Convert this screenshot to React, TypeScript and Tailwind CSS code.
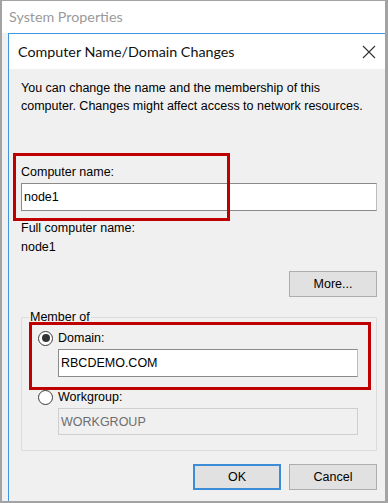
import React from "react";

const body = { fontFamily: '"Liberation Sans", Arial, sans-serif' };
const title = { fontFamily: 'Lato, "Noto Sans", sans-serif' };

function Radio({ checked }: { checked?: boolean }) {
  return (
    <div className="w-[15px] h-[15px] rounded-full border border-[#3a3a3a] bg-white flex items-center justify-center shrink-0">
      {checked && <div className="w-[8px] h-[8px] rounded-full bg-[#333333]" />}
    </div>
  );
}

export default function App() {
  return (
    <div
      className="w-[388px] h-[503px] border-t border-l-2 border-r-[3px] border-b-2 border-[#a3a3a3] bg-white flex flex-col overflow-hidden text-black"
      style={body}
    >
      <div className="h-[32px] shrink-0 flex items-center pl-[7px] text-[14.3px] text-[#9a9a9a]" style={title}>
        System Properties
      </div>
      <div className="flex flex-1 bg-[#f0f0f0]">
        <div className="w-[6px] shrink-0" />
        <div className="flex-1 flex flex-col border-l border-t border-[#3f95de] relative">
          <div className="h-[35px] bg-white flex items-center justify-between pl-[9px] pr-[8px] shrink-0">
            <span className="text-[14.3px] text-[#111]" style={title}>Computer Name/Domain Changes</span>
            <svg width="14" height="14" viewBox="0 0 14 14" className="mr-[1px]">
              <path d="M1 1 L13 13 M13 1 L1 13" stroke="#333" strokeWidth="1.1" />
            </svg>
          </div>
          <div className="flex-1 bg-[#f0f0f0] pl-[12px] pr-[8px] flex flex-col text-[12.5px] leading-[18px]">
            <p className="mt-[10px]">
              You can change the name and the membership of this
              <br />
              computer. Changes might affect access to network resources.
            </p>
            <div className="mt-[48px]">Computer name:</div>
            <div className="mt-[2px] h-[28px] bg-white border border-[#8a8a8a] border-r-[#bdbdbd] flex items-center pl-[2px]">
              node1
            </div>
            <div className="mt-[8px]">Full computer name:</div>
            <div className="mt-[1px]">node1</div>
            <div className="mt-[15px] flex justify-end">
              <div className="w-[88px] h-[26px] bg-[#e1e1e1] border border-[#adadad] flex items-center justify-center">
                More...
              </div>
            </div>
            <div className="mt-[20px] relative border border-[#dcdcdc] h-[134px] pl-[16px] pr-[18px] pt-[11px] flex flex-col">
              <div className="absolute left-[7px] top-[-10px] bg-[#f0f0f0] px-[1px]">Member of</div>
              <div className="flex items-center h-[18px] gap-[5px]">
                <Radio checked />
                <span>Domain:</span>
              </div>
              <div className="mt-[2px] ml-[20px] h-[28px] bg-white border border-[#8a8a8a] border-r-[#bdbdbd] flex items-center pl-[2px]">
                RBCDEMO.COM
              </div>
              <div className="mt-[11px] flex items-center h-[18px] gap-[5px]">
                <Radio />
                <span>Workgroup:</span>
              </div>
              <div className="mt-[2px] ml-[20px] h-[27px] bg-[#f0f0f0] border border-[#cfcfcf] flex items-center pl-[2px] text-[#6d6d6d]">
                WORKGROUP
              </div>
            </div>
            <div className="mt-[13px] flex justify-end gap-[8px]">
              <div className="w-[88px] h-[26px] bg-[#e1e1e1] border-2 border-[#3c8cd8] flex items-center justify-center">
                OK
              </div>
              <div className="w-[88px] h-[26px] bg-[#e1e1e1] border border-[#adadad] flex items-center justify-center">
                Cancel
              </div>
            </div>
          </div>
          <div className="absolute left-[4px] top-[119px] w-[217px] h-[68px] border-[3px] border-[#c00000] pointer-events-none" />
          <div className="absolute left-[20px] top-[288px] w-[342px] h-[68px] border-[3px] border-[#c00000] pointer-events-none" />
        </div>
      </div>
    </div>
  );
}
